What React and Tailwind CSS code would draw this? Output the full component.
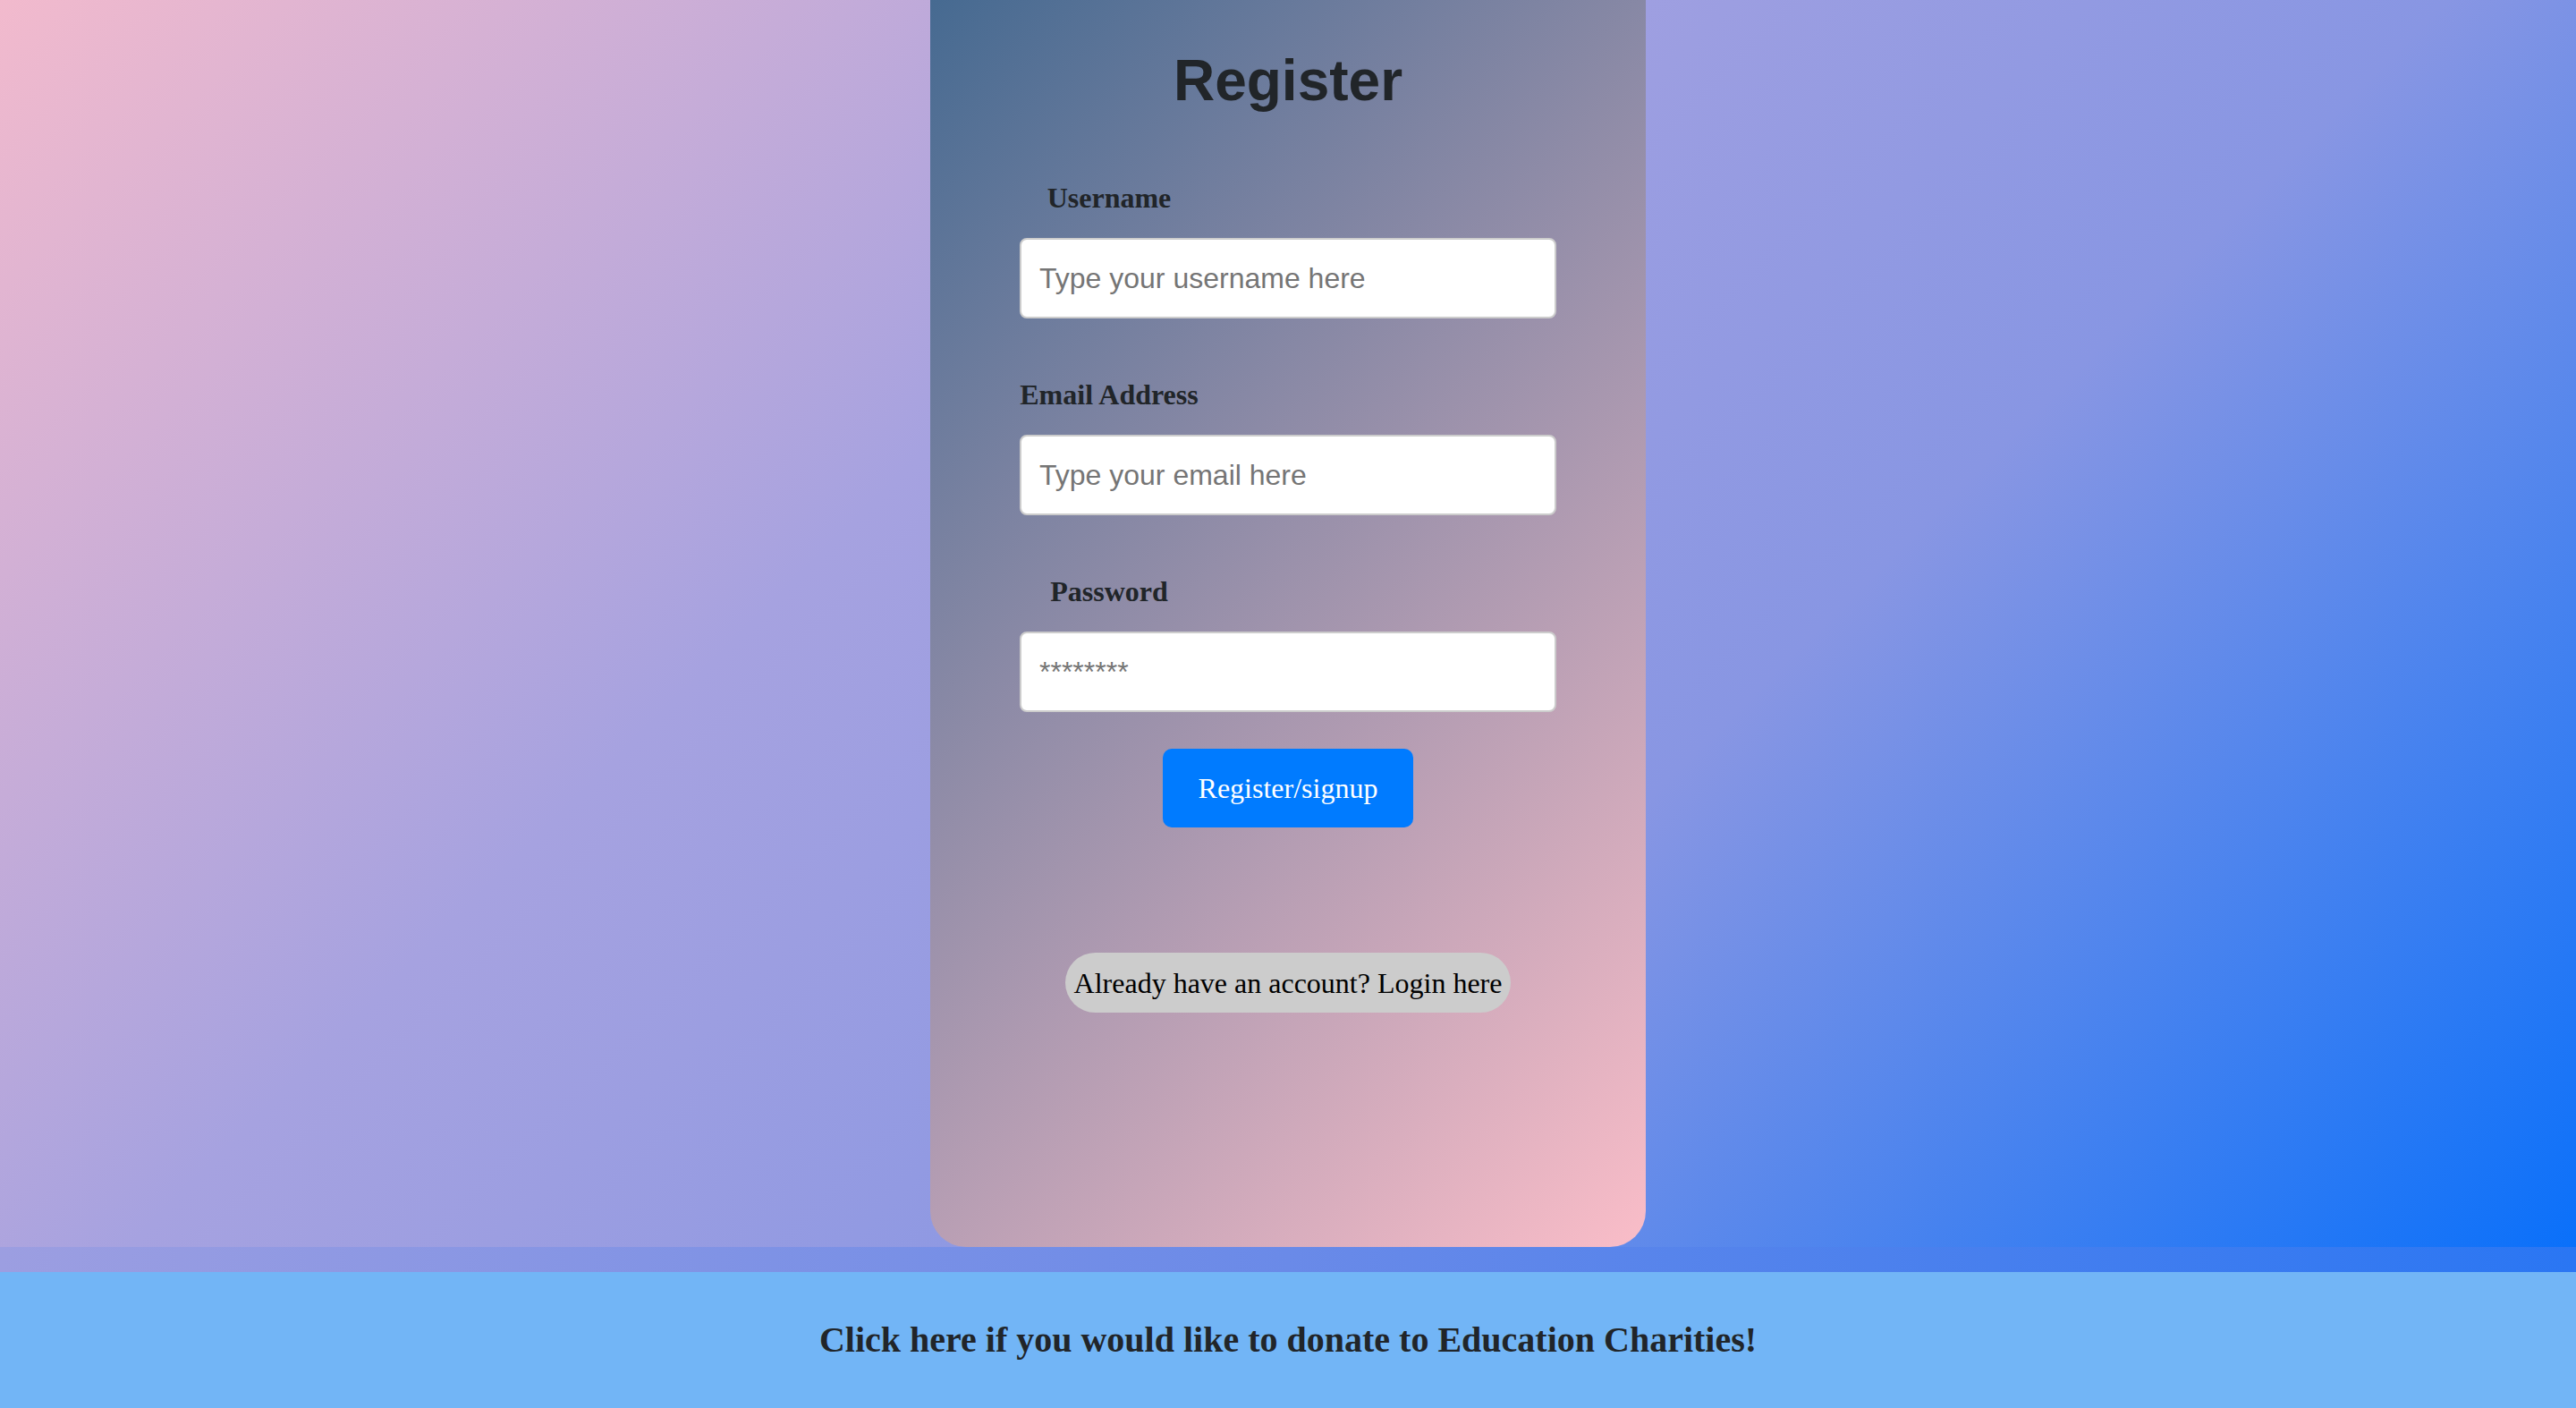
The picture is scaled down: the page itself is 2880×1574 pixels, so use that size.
import React, { useState } from 'react';

const serif = "font-['Liberation_Serif','Times_New_Roman',serif]";
const sans = "font-['Liberation_Sans',Arial,sans-serif]";

const Field = ({ label, type, placeholder, value, onChange, first }) => (
  <div className={first ? 'mt-[76px]' : 'mt-[67px]'}>
    <label className={`block w-[200px] text-center text-[32px] leading-[36px] font-bold text-[#212529] ${serif}`}>
      {label}
    </label>
    <input
      type={type}
      placeholder={placeholder}
      value={value}
      onChange={(e) => onChange(e.target.value)}
      className={`mt-[27px] block w-[600px] h-[90px] bg-white border-2 border-[#cccccc] rounded-[8px] px-[20px] text-[32px] text-[#212529] placeholder:text-[#757575] outline-none ${sans}`}
    />
  </div>
);

const App = () => {
  const [username, setUsername] = useState('');
  const [email, setEmail] = useState('');
  const [password, setPassword] = useState('');

  const handleSubmit = (e) => {
    e.preventDefault();
  };

  return (
    <div className="w-full min-h-screen flex flex-col">
      <div className="flex justify-center bg-[linear-gradient(135deg,#f2bacd_0%,#a6a2e0_36%,#8896e3_64%,#0a70fa_100%)]">
        <div className="w-[800px] flex flex-col items-center pt-[53px] pb-[262px] rounded-b-[40px] bg-[linear-gradient(135deg,#466a91,#fabdc8)]">
          <h1 className={`text-[64px] leading-[74px] font-bold text-[#212529] ${sans}`}>Register</h1>
          <form onSubmit={handleSubmit} className="flex flex-col items-center">
            <Field first label="Username" type="text" placeholder="Type your username here" value={username} onChange={setUsername} />
            <Field label="Email Address" type="email" placeholder="Type your email here" value={email} onChange={setEmail} />
            <Field label="Password" type="password" placeholder="********" value={password} onChange={setPassword} />
            <button
              type="submit"
              className={`mt-[41px] w-[280px] h-[88px] rounded-[10px] bg-[#007bff] text-white text-[32px] ${serif}`}
            >
              Register/signup
            </button>
          </form>
          <button className={`mt-[140px] h-[67px] px-[10px] rounded-full bg-[#cccccc] text-black text-[32px] ${serif}`}>
            Already have an account? Login here
          </button>
        </div>
      </div>
      <div className="h-[28px] bg-[linear-gradient(to_right,#9c9ee1,#6a8ae8,#2a76f3)]"></div>
      <div className="h-[152px] flex items-center justify-center bg-[#72b5f6]">
        <p className={`text-[40px] font-bold text-[#212529] ${serif}`}>
          Click here if you would like to donate to Education Charities!
        </p>
      </div>
    </div>
  );
};

export default App;
